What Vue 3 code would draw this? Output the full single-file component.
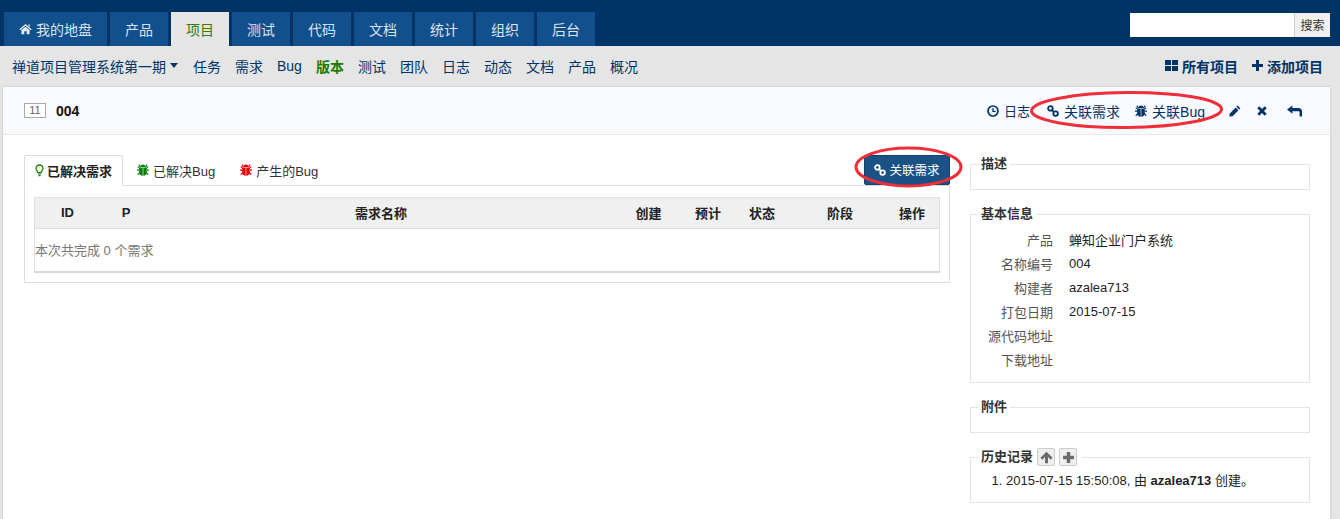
<script setup>
const mainTabs = ['产品', '项目', '测试', '代码', '文档', '统计', '组织', '后台']
const subItems = ['任务', '需求', 'Bug', '版本', '测试', '团队', '日志', '动态', '文档', '产品', '概况']
const columns = ['ID', 'P', '需求名称', '创建', '预计', '状态', '阶段', '操作']
const widths = [65, 52, 458, 77, 42, 66, 90, 54]
const info = [
  ['产品', '蝉知企业门户系统'],
  ['名称编号', '004'],
  ['构建者', 'azalea713'],
  ['打包日期', '2015-07-15'],
  ['源代码地址', ''],
  ['下载地址', '']
]
const bugPath = 'M3.3 3 C3.3 1.5 4.6 .6 6 .6 C7.4 .6 8.7 1.5 8.7 3 Z M1.4 .9 L2.3 .3 L3.6 2.5 L2.8 3.2 Z M10.6 .9 L9.7 .3 L8.4 2.5 L9.2 3.2 Z M2.2 3.5 H5.7 V11.8 C3.6 11.6 2.2 10.2 2.2 8.2 Z M9.8 3.5 H6.3 V11.8 C8.4 11.6 9.8 10.2 9.8 8.2 Z M0 5.6 H2.4 V6.7 H0 Z M9.6 5.6 H12 V6.7 H9.6 Z M.3 10.4 L2.4 8 L3.1 8.9 L1.1 11.3 Z M11.7 10.4 L9.6 8 L8.9 8.9 L10.9 11.3 Z M.4 3 L1.1 2.3 L3 4 L2.6 5 Z M11.6 3 L10.9 2.3 L9 4 L9.4 5 Z'
</script>

<template>
  <div class="page">
    <header class="top">
      <nav class="tabs">
        <a class="tab home">
          <svg class="home-ico" viewBox="0 0 14 12" width="13" height="12"><path d="M7 .6 L13.6 6.3 L12.7 7.3 L7 2.5 L1.3 7.3 L.4 6.3 Z M2.6 7.2 L7 3.6 L11.4 7.2 L11.4 11.6 L8.3 11.6 L8.3 8.3 L5.7 8.3 L5.7 11.6 L2.6 11.6 Z M10 1.2 L11.6 1.2 L11.6 3.8 L10 2.5 Z" fill="#e4eaf1"/></svg>
          我的地盘
        </a>
        <a v-for="t in mainTabs" :key="t" class="tab" :class="{ active: t === '项目' }">{{ t }}</a>
      </nav>
      <form class="search" @submit.prevent>
        <input class="search-input" type="text" />
        <button class="search-btn" type="button">搜索</button>
      </form>
    </header>

    <div class="subnav">
      <div class="sub-left">
        <a class="project">禅道项目管理系统第一期<span class="caret"></span></a>
        <a v-for="(s, i) in subItems" :key="i" class="sub-item" :class="{ on: s === '版本' }">{{ s }}</a>
      </div>
      <div class="sub-right">
        <a class="sub-action">
          <svg viewBox="0 0 13 11" width="13" height="11"><path d="M0 0h6v5H0zM7 0h6v5H7zM0 6h6v5H0zM7 6h6v5H7z" fill="#003366"/></svg>
          所有项目
        </a>
        <a class="sub-action">
          <svg viewBox="0 0 11 11" width="11" height="11"><path d="M4 0h3v4h4v3H7v4H4V7H0V4h4z" fill="#003366"/></svg>
          添加项目
        </a>
      </div>
    </div>

    <main class="card">
      <div class="title-bar">
        <div class="title-left">
          <span class="id-box">11</span>
          <strong class="title-name">004</strong>
        </div>
        <div class="toolbar">
          <a class="tool first">
            <svg viewBox="0 0 12 12" width="12" height="12"><circle cx="6" cy="6" r="5" fill="none" stroke="#003366" stroke-width="1.7"/><path d="M6 3v3.4h2.6" fill="none" stroke="#003366" stroke-width="1.3"/></svg>
            日志
          </a>
          <a class="tool link">
            <svg viewBox="0 0 12 12" width="12" height="12"><circle cx="3.4" cy="3.4" r="2.3" fill="none" stroke="#003366" stroke-width="1.8"/><circle cx="8.6" cy="8.6" r="2.3" fill="none" stroke="#003366" stroke-width="1.8"/><path d="M4.8 4.8L7.2 7.2" stroke="#003366" stroke-width="1.8"/></svg>
            关联需求
          </a>
          <a class="tool bug">
            <svg viewBox="0 0 12 12" width="12" height="12"><path :d="bugPath" fill="#003366"/></svg>
            关联Bug
          </a>
          <a class="tool pencil">
            <svg viewBox="0 0 12 12" width="12" height="12"><path d="M8.6.6 L11.4 3.4 L10.2 4.6 L7.4 1.8 Z M6.7 2.5 L9.5 5.3 L3.6 11.2 L.4 11.6 L.8 8.4 Z" fill="#003366"/></svg>
          </a>
          <a class="tool cross">
            <svg viewBox="0 0 10 10" width="10" height="10"><path d="M1.3 1.3L8.7 8.7M8.7 1.3L1.3 8.7" stroke="#003366" stroke-width="2.8"/></svg>
          </a>
          <a class="tool back">
            <svg viewBox="0 0 15 12" width="15" height="12"><path d="M0 4.6 L5.4 .4 L5.4 3 L11.5 3 C13.6 3 15 4.4 15 6.4 L15 11.4 L12.6 11.4 L12.6 7.2 C12.6 6.6 12.2 6.2 11.6 6.2 L5.4 6.2 L5.4 8.8 Z" fill="#003366"/></svg>
          </a>
        </div>
      </div>

      <div class="content">
        <section class="left">
          <div class="tab-head">
            <a class="ctab current">
              <svg viewBox="0 0 9 13" width="9" height="13"><path d="M4.5 1 C2.4 1 1 2.5 1 4.3 C1 6.2 2.6 7 2.9 8.7 L6.1 8.7 C6.4 7 8 6.2 8 4.3 C8 2.5 6.6 1 4.5 1 Z" fill="#fdfbd8" stroke="#1f7a1f" stroke-width="1.3"/><path d="M3 10h3M3.4 11.7h2.2" stroke="#1f7a1f" stroke-width="1.2"/></svg>
              已解决需求
            </a>
            <a class="ctab">
              <svg viewBox="0 0 12 12" width="12" height="12"><path :d="bugPath" fill="#0a7d0a"/></svg>
              已解决Bug
            </a>
            <a class="ctab">
              <svg viewBox="0 0 12 12" width="12" height="12"><path :d="bugPath" fill="#ee0000"/></svg>
              产生的Bug
            </a>
            <button class="link-btn" type="button">
              <svg viewBox="0 0 12 12" width="12" height="12"><circle cx="3.4" cy="3.4" r="2.3" fill="none" stroke="#fff" stroke-width="1.8"/><circle cx="8.6" cy="8.6" r="2.3" fill="none" stroke="#fff" stroke-width="1.8"/><path d="M4.8 4.8L7.2 7.2" stroke="#fff" stroke-width="1.8"/></svg>
              关联需求
            </button>
          </div>
          <div class="tab-body">
            <table class="grid">
              <colgroup>
                <col v-for="(w, i) in widths" :key="i" :style="{ width: w + 'px' }" />
              </colgroup>
              <thead>
                <tr><th v-for="c in columns" :key="c">{{ c }}</th></tr>
              </thead>
              <tfoot>
                <tr><td :colspan="columns.length">本次共完成 0 个需求</td></tr>
              </tfoot>
            </table>
          </div>
        </section>

        <aside class="side">
          <fieldset class="box empty"><legend>描述</legend></fieldset>
          <fieldset class="box">
            <legend>基本信息</legend>
            <dl class="info">
              <div v-for="row in info" :key="row[0]" class="info-row">
                <dt>{{ row[0] }}</dt>
                <dd>{{ row[1] }}</dd>
              </div>
            </dl>
          </fieldset>
          <fieldset class="box empty"><legend>附件</legend></fieldset>
          <fieldset class="box">
            <legend class="history-legend">
              历史记录
              <span class="mini-btn">
                <svg viewBox="0 0 12 12" width="13" height="13"><path d="M6 .6L11.6 6.2L9.8 8L7.4 5.6V11.4H4.6V5.6L2.2 8L.4 6.2Z" fill="#6b6b6b"/></svg>
              </span>
              <span class="mini-btn">
                <svg viewBox="0 0 12 12" width="13" height="13"><path d="M4.4 1h3.2v3.4H11v3.2H7.6V11H4.4V7.6H1V4.4h3.4z" fill="#6b6b6b"/></svg>
              </span>
            </legend>
            <ol class="history">
              <li>2015-07-15 15:50:08, 由 <strong>azalea713</strong> 创建。</li>
            </ol>
          </fieldset>
        </aside>
      </div>
    </main>

    <svg class="marks" width="1340" height="519" viewBox="0 0 1340 519">
      <ellipse cx="1126.5" cy="110" rx="95" ry="17.5" fill="none" stroke="#ee2e38" stroke-width="3" transform="rotate(-.5 1126 110)"/>
      <ellipse cx="908.5" cy="167" rx="52.5" ry="19" fill="none" stroke="#ee2e38" stroke-width="3"/>
    </svg>
  </div>
</template>

<style>
html, body { margin: 0; background: #e5e5e5; overflow: hidden; }
</style>

<style scoped>
.page {
  position: relative;
  width: 1340px;
  height: 519px;
  overflow: hidden;
  background: #e5e5e5;
  font-family: "Liberation Sans", "Noto Sans CJK SC", sans-serif;
  font-size: 13px;
  color: #333;
}
.top {
  height: 46px;
  box-sizing: border-box;
  padding: 12px 10px 0 4px;
  background: #003366;
  display: flex;
  justify-content: space-between;
}
.tabs { display: flex; gap: 3px; }
.tab {
  width: 58px;
  height: 34px;
  display: flex;
  align-items: center;
  justify-content: center;
  background: #124f8d;
  color: #dbe4ee;
  font-size: 14px;
}
.tab.home { width: 103px; gap: 4px; }
.home-ico { flex: none; }
.tab.active { background: #e5e5e5; color: #2f7d12; }
.search { display: flex; height: 24px; margin-top: 1px; }
.search-input {
  width: 164px;
  height: 24px;
  box-sizing: border-box;
  border: 0;
  padding: 0;
  background: #fff;
  outline: 0;
}
.search-btn {
  width: 36px;
  height: 24px;
  margin: 0;
  padding: 0 0 2px;
  border: 0;
  border-left: 1px solid #ccc;
  background: #f0f0f0;
  color: #333;
  font: 12px "Liberation Sans", "Noto Sans CJK SC", sans-serif;
}
.subnav {
  height: 41px;
  box-sizing: border-box;
  padding: 0 17px 2px 12px;
  display: flex;
  align-items: center;
  justify-content: space-between;
  font-size: 14px;
  color: #003366;
}
.sub-left, .sub-right { display: flex; align-items: center; }
.project { display: flex; align-items: center; margin-right: 8px; }
.caret {
  width: 0;
  height: 0;
  margin-left: 4px;
  border-left: 4.5px solid transparent;
  border-right: 4.5px solid transparent;
  border-top: 5px solid #003366;
}
.sub-item { padding: 0 7px; }
.sub-item.on { color: #1f7a00; font-weight: bold; }
.sub-action { display: flex; align-items: center; gap: 4px; margin-left: 14px; font-weight: bold; }
.card {
  width: 1327px;
  height: 432px;
  margin-left: 3px;
  background: #fff;
  box-shadow: 0 0 2px #bbb;
}
.title-bar {
  height: 48px;
  box-sizing: border-box;
  padding: 0 28px 0 21px;
  display: flex;
  align-items: center;
  justify-content: space-between;
  background: #f8faff;
  border-bottom: 1px solid #e8e8e8;
}
.title-left { display: flex; align-items: center; }
.id-box {
  width: 22px;
  height: 15px;
  box-sizing: border-box;
  border: 1px solid #aaa;
  text-align: center;
  font-size: 11px;
  line-height: 13px;
  color: #666;
  background: #fff;
}
.title-name { margin-left: 10px; font-size: 14px; color: #111; }
.toolbar { display: flex; align-items: center; color: #003366; font-size: 14px; }
.tool { display: flex; align-items: center; gap: 5px; }
.tool svg { flex: none; }
.tool.first { font-size: 13px; }
.tool.link { margin-left: 17px; }
.tool.bug { margin-left: 15px; }
.tool.pencil { margin-left: 24px; }
.tool.cross { margin-left: 16px; }
.tool.back { margin-left: 20px; }
.content {
  padding: 20px 21px 0;
  display: flex;
  gap: 20px;
  align-items: flex-start;
}
.left { width: 926px; flex: none; }
.tab-head {
  position: relative;
  height: 31px;
  box-sizing: border-box;
  display: flex;
  align-items: center;
  border-bottom: 1px solid #ddd;
}
.ctab {
  display: flex;
  align-items: center;
  gap: 4px;
  height: 31px;
  box-sizing: border-box;
  padding: 0 11px 0 14px;
  color: #333;
  margin-right: 0;
}
.ctab.current {
  width: 99px;
  padding: 0 0 0 10px;
  gap: 3px;
  background: #fff;
  border: 1px solid #ddd;
  border-bottom: 1px solid #fff;
  border-radius: 2px 2px 0 0;
  font-weight: bold;
  color: #222;
}
.link-btn {
  margin: 0 0 1px auto;
  width: 86px;
  height: 30px;
  padding: 0;
  border: 1px solid #14406b;
  border-radius: 2px;
  background: #1a5286;
  color: #fff;
  font: 12.5px "Liberation Sans", "Noto Sans CJK SC", sans-serif;
  display: flex;
  align-items: center;
  justify-content: center;
  gap: 3px;
}
.tab-body {
  height: 97px;
  box-sizing: border-box;
  padding: 11px 9px 0;
  border: 1px solid #ddd;
  border-top: 0;
}
.grid {
  width: 904px;
  table-layout: fixed;
  border-collapse: separate;
  border-spacing: 0;
  border: 1px solid #e0e0e0;
  border-bottom: 0;
  box-shadow: 0 2px 0 #d8d8d8;
  margin-top: 0;
}
.grid th {
  height: 30px;
  box-sizing: border-box;
  padding: 0 0 2px;
  background: #f0f0f0;
  border-bottom: 1px solid #ddd;
  color: #222;
  font-size: 13px;
  text-align: center;
}
.grid tr th { height: 31px; }
.grid td {
  height: 42px;
  box-sizing: border-box;
  padding: 0 0 2px;
  color: #777;
  font-size: 13px;
}
.side { width: 340px; flex: none; margin-top: -1px; }
.box {
  margin: 0 0 14px;
  padding: 0;
  min-width: 0;
  box-sizing: border-box;
  border: 1px solid #e4e4e4;
  border-width: 1px;
}
.box.empty { min-height: 36px; }
.box legend {
  margin-left: 7px;
  padding: 0 3px;
  height: 20px;
  line-height: 20px;
  font-weight: bold;
  color: #333;
  font-size: 13px;
}
.box .history-legend {
  display: flex;
  align-items: center;
  gap: 4px;
  padding-right: 5px;
}
.mini-btn {
  width: 18px;
  height: 18px;
  box-sizing: border-box;
  display: inline-flex;
  align-items: center;
  justify-content: center;
  border: 1px solid #ccc;
  border-radius: 2px;
  background: #efefef;
}
.info { margin: 3px 0 11px; }
.info-row { display: flex; height: 24px; align-items: center; }
.info dt { width: 82px; text-align: right; color: #555; }
.info dd { margin: 0 0 0 16px; color: #222; }
.history {
  margin: 4px 0 11px;
  padding: 0 0 0 35px;
  line-height: 20px;
  color: #222;
}
.marks { position: absolute; left: 0; top: 0; pointer-events: none; }
</style>
